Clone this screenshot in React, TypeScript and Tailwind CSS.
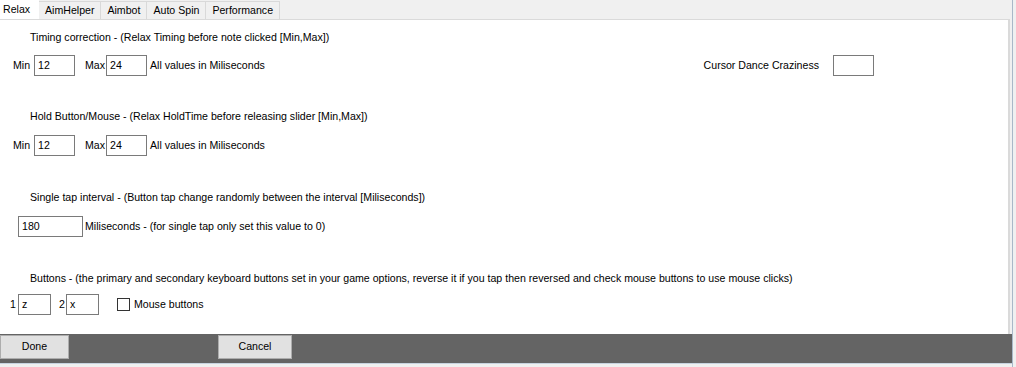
import { useState } from "react";

const font = { fontFamily: '"Liberation Sans", Arial, sans-serif' };

function Field({ value, w }: { value: string; w: string }) {
  return (
    <div
      className={`${w} h-[21px] border border-[#7a7a7a] bg-white pl-[3px] text-[10.6px] leading-[19px] text-black`}
    >
      {value}
    </div>
  );
}

function Tabs() {
  const tabs = ["AimHelper", "Aimbot", "Auto Spin", "Performance"];
  return (
    <div className="flex h-[19px] items-end">
      <div className="flex h-[19px] w-[39px] items-center bg-white pl-[3px] text-[10.6px] leading-[13px] text-black">
        Relax
      </div>
      {tabs.map((t) => (
        <div
          key={t}
          className="flex h-[18px] items-center border border-b-0 border-l-0 border-[#d9d9d9] bg-[#f0f0f0] px-[6px] text-[10.6px] leading-[13px] text-black first:border-l"
        >
          {t}
        </div>
      ))}
    </div>
  );
}

function MinMaxRow({ extra }: { extra?: boolean }) {
  return (
    <div className="flex items-center text-[10.6px] leading-[13px] text-black">
      <span className="ml-[13px] w-[21px]">Min</span>
      <Field value="12" w="w-[41px]" />
      <span className="ml-[10px] w-[21px]">Max</span>
      <Field value="24" w="w-[41px]" />
      <span className="ml-[3px]">All values in Miliseconds</span>
      {extra && (
        <div className="ml-auto mr-[134px] flex items-center">
          <span className="mr-[14px]">Cursor Dance Craziness</span>
          <Field value="" w="w-[41px]" />
        </div>
      )}
    </div>
  );
}

function Title({ children, mt }: { children: string; mt: string }) {
  return (
    <div className={`ml-[30px] ${mt} text-[10.6px] leading-[13px] text-black`}>{children}</div>
  );
}

export default function App() {
  const [mouse, setMouse] = useState(false);

  return (
    <div className="relative h-[367px] w-[1016px] overflow-hidden bg-[#f0f0f0]" style={font}>
      <div className="flex w-[1010px] flex-col">
        <Tabs />
        {/* Tab page */}
        <div className="h-[315px] border-r-2 border-t border-[#dadada] bg-white pt-[11px]">
          <Title mt="mt-0">Timing correction - (Relax Timing before note clicked [Min,Max])</Title>
          <div className="mt-[11px]">
            <MinMaxRow extra />
          </div>

          <Title mt="mt-[34px]">Hold Button/Mouse - (Relax HoldTime before releasing slider [Min,Max])</Title>
          <div className="mt-[12px]">
            <MinMaxRow />
          </div>

          <Title mt="mt-[35px]">
            Single tap interval - (Button tap change randomly between the interval [Miliseconds])
          </Title>
          <div className="ml-[18px] mt-[12px] flex items-center text-[10.6px] leading-[13px] text-black">
            <Field value="180" w="w-[65px]" />
            <span className="ml-[2px]">Miliseconds - (for single tap only set this value to 0)</span>
          </div>

          <Title mt="mt-[35px]">
            Buttons - (the primary and secondary keyboard buttons set in your game options, reverse it if you tap then reversed and check mouse buttons to use mouse clicks)
          </Title>
          <div className="mt-[9px] flex items-center text-[10.6px] leading-[13px] text-black">
            <span className="ml-[10px] w-[8px]">1</span>
            <Field value="z" w="w-[33px]" />
            <span className="ml-[8px] w-[7px]">2</span>
            <Field value="x" w="w-[33px]" />
            <button
              onClick={() => setMouse(!mouse)}
              className="ml-[18px] flex items-center"
            >
              <span className="flex h-[13px] w-[13px] items-center justify-center border border-[#333333] bg-white text-[10px] leading-none">
                {mouse ? "✓" : ""}
              </span>
              <span className="ml-[4px]">Mouse buttons</span>
            </button>
          </div>
        </div>
        {/* Bottom bar */}
        <div className="flex h-[29px] w-[1012px] items-start bg-[#646464] pt-[1px]">
          <button className="h-[24px] w-[69px] border border-[#adadad] bg-[#e1e1e1] text-[10.6px] text-black">
            Done
          </button>
          <button className="ml-[149px] h-[24px] w-[74px] border border-[#adadad] bg-[#e1e1e1] text-[10.6px] text-black">
            Cancel
          </button>
        </div>
        <div className="h-px w-[1012px] bg-[#c8d4e0]" />
      </div>
      <div className="absolute right-[3px] top-0 h-[367px] w-px bg-[#a9b8c8]" />
    </div>
  );
}
